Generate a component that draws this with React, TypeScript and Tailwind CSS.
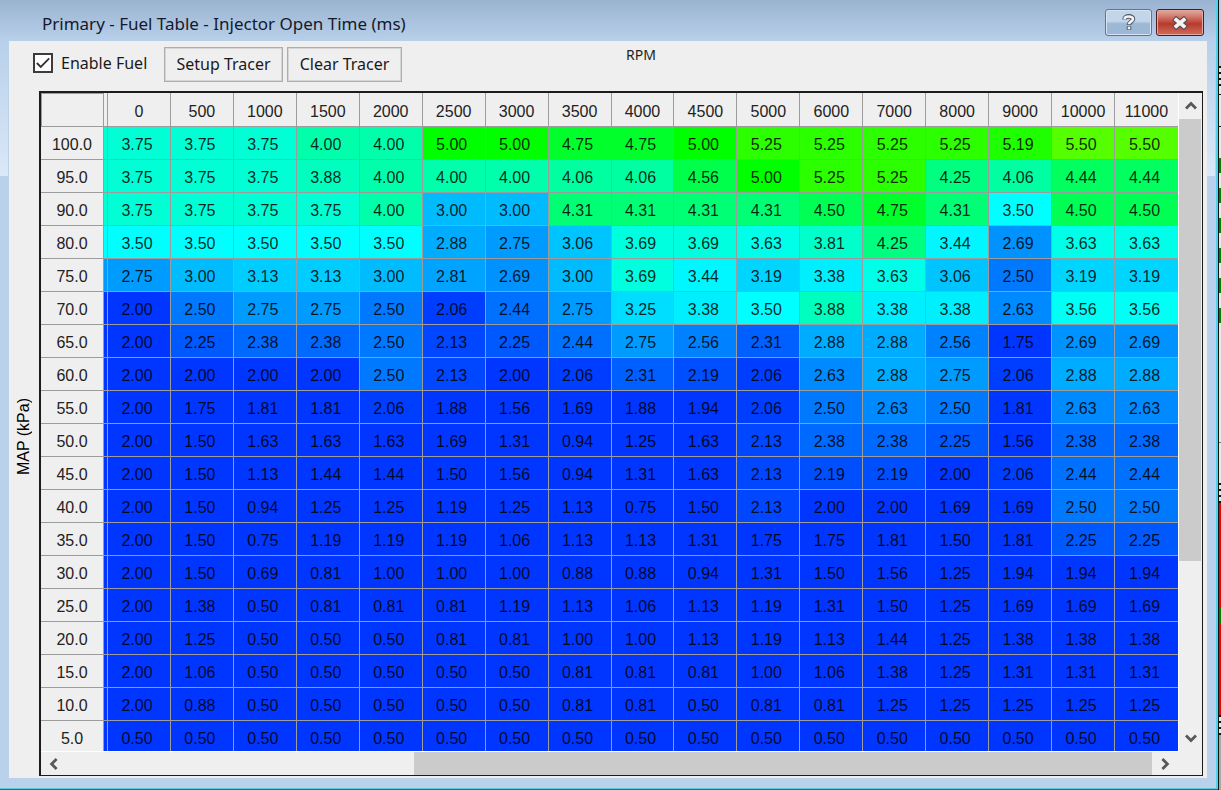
import { useState } from "react";

const rpm = [0, 500, 1000, 1500, 2000, 2500, 3000, 3500, 4000, 4500, 5000, 6000, 7000, 8000, 9000, 10000, 11000];

const rows: [string, string][] = [
  ["100.0", "3.75 3.75 3.75 4.00 4.00 5.00 5.00 4.75 4.75 5.00 5.25 5.25 5.25 5.25 5.19 5.50 5.50"],
  ["95.0", "3.75 3.75 3.75 3.88 4.00 4.00 4.00 4.06 4.06 4.56 5.00 5.25 5.25 4.25 4.06 4.44 4.44"],
  ["90.0", "3.75 3.75 3.75 3.75 4.00 3.00 3.00 4.31 4.31 4.31 4.31 4.50 4.75 4.31 3.50 4.50 4.50"],
  ["80.0", "3.50 3.50 3.50 3.50 3.50 2.88 2.75 3.06 3.69 3.69 3.63 3.81 4.25 3.44 2.69 3.63 3.63"],
  ["75.0", "2.75 3.00 3.13 3.13 3.00 2.81 2.69 3.00 3.69 3.44 3.19 3.38 3.63 3.06 2.50 3.19 3.19"],
  ["70.0", "2.00 2.50 2.75 2.75 2.50 2.06 2.44 2.75 3.25 3.38 3.50 3.88 3.38 3.38 2.63 3.56 3.56"],
  ["65.0", "2.00 2.25 2.38 2.38 2.50 2.13 2.25 2.44 2.75 2.56 2.31 2.88 2.88 2.56 1.75 2.69 2.69"],
  ["60.0", "2.00 2.00 2.00 2.00 2.50 2.13 2.00 2.06 2.31 2.19 2.06 2.63 2.88 2.75 2.06 2.88 2.88"],
  ["55.0", "2.00 1.75 1.81 1.81 2.06 1.88 1.56 1.69 1.88 1.94 2.06 2.50 2.63 2.50 1.81 2.63 2.63"],
  ["50.0", "2.00 1.50 1.63 1.63 1.63 1.69 1.31 0.94 1.25 1.63 2.13 2.38 2.38 2.25 1.56 2.38 2.38"],
  ["45.0", "2.00 1.50 1.13 1.44 1.44 1.50 1.56 0.94 1.31 1.63 2.13 2.19 2.19 2.00 2.06 2.44 2.44"],
  ["40.0", "2.00 1.50 0.94 1.25 1.25 1.19 1.25 1.13 0.75 1.50 2.13 2.00 2.00 1.69 1.69 2.50 2.50"],
  ["35.0", "2.00 1.50 0.75 1.19 1.19 1.19 1.06 1.13 1.13 1.31 1.75 1.75 1.81 1.50 1.81 2.25 2.25"],
  ["30.0", "2.00 1.50 0.69 0.81 1.00 1.00 1.00 0.88 0.88 0.94 1.31 1.50 1.56 1.25 1.94 1.94 1.94"],
  ["25.0", "2.00 1.38 0.50 0.81 0.81 0.81 1.19 1.13 1.06 1.13 1.19 1.31 1.50 1.25 1.69 1.69 1.69"],
  ["20.0", "2.00 1.25 0.50 0.50 0.50 0.81 0.81 1.00 1.00 1.13 1.19 1.13 1.44 1.25 1.38 1.38 1.38"],
  ["15.0", "2.00 1.06 0.50 0.50 0.50 0.50 0.50 0.81 0.81 0.81 1.00 1.06 1.38 1.25 1.31 1.31 1.31"],
  ["10.0", "2.00 0.88 0.50 0.50 0.50 0.50 0.50 0.81 0.81 0.50 0.81 0.81 1.25 1.25 1.25 1.25 1.25"],
  ["5.0", "0.50 0.50 0.50 0.50 0.50 0.50 0.50 0.50 0.50 0.50 0.50 0.50 0.50 0.50 0.50 0.50 0.50"],
];

// Blue up to 2 ms, cyan at 3.5 ms, green at 5 ms, then towards yellow.
function heat(ms: number) {
  if (ms <= 3.5) return `rgb(0, ${Math.round(255 - (3.5 - Math.max(ms, 2)) * 134)}, 255)`;
  if (ms <= 5) return `rgb(0, 255, ${Math.round((5 - ms) * 170)})`;
  return `rgb(${Math.round((ms - 5) * 170)}, 255, 0)`;
}

function Chevron({ className }: { className: string }) {
  return (
    <svg viewBox="0 0 12 12" className={`size-3 ${className}`} fill="none" stroke="#585858" strokeWidth="2.8" aria-hidden="true">
      <path d="M1 8.6 6 3.6l5 5" />
    </svg>
  );
}

function TitleBar() {
  return (
    <header className="flex h-[41px] shrink-0 items-start justify-between bg-linear-to-b from-[#9ab3d0] to-[#b8d0ea] pr-3 pl-[42px]">
      <h1 className="pt-3 text-[17px] leading-6 text-[#15192b]">Primary - Fuel Table - Injector Open Time (ms)</h1>
      <div className="flex gap-1 pt-[9px]">
        <button
          type="button"
          aria-label="Help"
          className="grid h-[27px] w-[47px] place-items-center rounded-[3px] border border-[#5f7590] bg-linear-to-b from-[#c3d5e9] from-45% to-[#9db8d5] to-55% inset-ring inset-ring-[#d5e3f2]"
        >
          <svg viewBox="0 0 14 17" className="h-[17px] w-3.5" fill="none" aria-hidden="true">
            <path d="M2.6 5.6C2.6 1.4 11 1.4 11 5.1c0 2.6-4 2.6-4 5.8M7 12.2v3.6" stroke="#4b5566" strokeWidth="4.6" />
            <path d="M2.6 5.2C2.6 1.6 11 1.6 11 5.1c0 2.6-4 2.6-4 5.2M7 12.7v2.6" stroke="#f4f4f4" strokeWidth="2.6" />
          </svg>
        </button>
        <button
          type="button"
          aria-label="Close"
          className="grid h-[27px] w-12 place-items-center rounded-[3px] border border-[#4f1b20] bg-linear-to-b from-[#dc9a8f] from-10% via-[#b83a2c] via-55% to-[#cf6c5c] inset-ring inset-ring-[#e3a99f]"
        >
          <svg viewBox="0 0 18 14" className="h-3.5 w-[18px]" fill="none" aria-hidden="true">
            <path d="M3 2 15 12M15 2 3 12" stroke="#5a4a52" strokeWidth="6" />
            <path d="M3.8 2.6 14.2 11.4M14.2 2.6 3.8 11.4" stroke="#f7f3f3" strokeWidth="3.8" />
          </svg>
        </button>
      </div>
    </header>
  );
}

function Toolbar() {
  const [enabled, setEnabled] = useState(true);
  const button = "h-[35px] border border-[#adadad] bg-[#efefef] pb-0.5 text-base leading-6 text-[#1a1a1a] inset-ring inset-ring-[#d6d6d6]";
  return (
    <div className="grid h-[50px] shrink-0 grid-cols-[1fr_auto_1fr] items-start pt-1.5">
      <div className="flex items-start pl-6">
        <label className="flex h-8 w-[131px] shrink-0 items-center gap-2 text-base leading-6 text-[#1a1a1a]">
          <span className="grid size-5 place-items-center">
            <input
              type="checkbox"
              checked={enabled}
              onChange={(e) => setEnabled(e.target.checked)}
              className="peer col-start-1 row-start-1 size-5 appearance-none border-2 border-[#3c3c3c] bg-white"
            />
            <svg viewBox="0 0 14 12" className="pointer-events-none invisible col-start-1 row-start-1 h-3 w-3.5 peer-checked:visible" fill="none" stroke="#333" strokeWidth="1.8" aria-hidden="true">
              <path d="M.8 6 4.8 10 13.2 1.4" />
            </svg>
          </span>
          Enable Fuel
        </label>
        <button type="button" className={`${button} w-[119px]`}>Setup Tracer</button>
        <button type="button" className={`${button} ml-1 w-[115px]`}>Clear Tracer</button>
      </div>
      <span className="pl-[66px] text-sm leading-4 text-[#222]">RPM</span>
    </div>
  );
}

function FuelTable() {
  const cell = "border-r border-b border-[#9c9c9c] px-0 pt-1 pb-0 text-center font-normal last:border-r-0";
  return (
    <div className="min-h-0 min-w-0 overflow-auto [scrollbar-width:none]">
      <table className="w-full table-fixed border-separate border-spacing-0 font-['Liberation_Sans',Arial,sans-serif] text-base leading-5 text-black/85">
        <colgroup>
          <col className="w-[63px]" />
          <col className="w-1" />
          {rpm.map((r) => (
            <col key={r} />
          ))}
        </colgroup>
        <thead>
          <tr className="h-[34px]">
            <td className={`${cell} border-t border-l`} />
            <td className={cell} />
            {rpm.map((r) => (
              <th key={r} scope="col" className={`${cell} text-[#222]`}>{r}</th>
            ))}
          </tr>
        </thead>
        <tbody>
          {rows.map(([load, line]) => {
            const values = line.split(" ");
            return (
              <tr key={load} className="h-[33px]">
                <th scope="row" className={`${cell} text-[#222]`}>{load}</th>
                <td className={cell} style={{ backgroundColor: heat(Number(values[0])) }} />
                {values.map((v, i) => (
                  <td key={rpm[i]} className={cell} style={{ backgroundColor: heat(Number(v)) }}>
                    <span className="pr-1">{v}</span>
                  </td>
                ))}
              </tr>
            );
          })}
        </tbody>
      </table>
    </div>
  );
}

// Sliver of the gauge window that shows past the dialog's right edge.
function Backdrop() {
  const dots = (
    <div className="flex h-5 shrink-0 flex-col justify-between">
      <div className="h-0.5 bg-[#111]" />
      <div className="h-0.5 bg-[#111]" />
      <div className="h-0.5 bg-[#111]" />
      <div className="h-0.5 bg-[#111]" />
    </div>
  );
  return (
    <div className="flex w-[3px] shrink-0 flex-col overflow-hidden border-l border-[#111] bg-[#e9e9e9]" aria-hidden="true">
      <div className="h-[66px] shrink-0 bg-[#c3cddb]" />
      {dots}
      <div className="h-[9px] shrink-0 border-b border-[#111]" />
      <div className="h-8 shrink-0 border-b border-[#111]" />
      <div className="h-[31px] shrink-0" />
      {[0, 1, 2, 3, 4, 5].map((n) => (
        <div key={n} className="h-[30px] shrink-0">
          <div className="h-[15px] bg-[#008000]" />
        </div>
      ))}
      <div className="h-[105px] shrink-0 border-b border-[#777]" />
      <div className="h-10 shrink-0" />
      {dots}
      <div className="h-[105px] shrink-0 bg-[#f00000]" />
      <div className="h-4 shrink-0 bg-[#008000]" />
      <div className="h-[91px] shrink-0 bg-[#f00000]" />
      {dots}
      <div className="flex-1 bg-[#a8a8a8]" />
    </div>
  );
}

export default function App() {
  return (
    <div className="flex h-screen bg-[#0b7c86] font-['Noto_Sans','Segoe_UI',sans-serif]">
      <div className="flex min-w-0 flex-1 flex-col">
        <section className="flex min-h-0 flex-1 flex-col border-r-2 border-b border-r-[#4fd3ea] border-b-[#5cc9d6] bg-[#b9d1ea]">
          <TitleBar />
          <div className="flex min-h-0 flex-1 pb-[10px]">
            <div className="w-[9px] shrink-0">
              <div className="h-[135px] w-2 bg-linear-to-b from-[#b8d0ea] to-[#dbe8f7]" />
            </div>
            <main className="flex min-w-0 flex-1 flex-col bg-[#efefef]">
              <Toolbar />
              <div className="flex min-h-0 flex-1 pr-1 pb-0.5">
                <div className="grid w-[30px] shrink-0 place-items-center pt-1.5 font-['Liberation_Sans',Arial,sans-serif] text-base leading-5 text-black">
                  <span className="rotate-180 [writing-mode:vertical-rl]">MAP (kPa)</span>
                </div>
                <div className="grid min-w-0 flex-1 grid-cols-[minmax(0,1fr)_24px] grid-rows-[minmax(0,1fr)_24px] border-2 border-r border-b border-[#1c1c1c]">
                  <FuelTable />
                  <div className="flex flex-col items-center border-l border-white">
                    <button type="button" aria-label="Scroll up" className="grid h-[26px] w-full shrink-0 place-items-center">
                      <Chevron className="" />
                    </button>
                    <div className="flex w-full flex-1 flex-col">
                      <div className="mr-px basis-[73%] bg-[#cbcbcb]" />
                    </div>
                    <button type="button" aria-label="Scroll down" className="grid h-[26px] w-full shrink-0 place-items-center">
                      <Chevron className="rotate-180" />
                    </button>
                  </div>
                  <div className="flex border-t border-white">
                    <button type="button" aria-label="Scroll left" className="grid w-[26px] shrink-0 place-items-center">
                      <Chevron className="-rotate-90" />
                    </button>
                    <div className="flex flex-1 justify-end">
                      <div className="basis-[68%] bg-[#cbcbcb]" />
                    </div>
                    <button type="button" aria-label="Scroll right" className="grid w-[26px] shrink-0 place-items-center">
                      <Chevron className="rotate-90" />
                    </button>
                  </div>
                </div>
              </div>
            </main>
            <div className="w-[9px] shrink-0">
              <div className="h-[135px] w-2 bg-linear-to-b from-[#b8d0ea] to-[#dbe8f7]" />
            </div>
          </div>
        </section>
        <div className="h-px shrink-0" />
      </div>
      <Backdrop />
    </div>
  );
}
